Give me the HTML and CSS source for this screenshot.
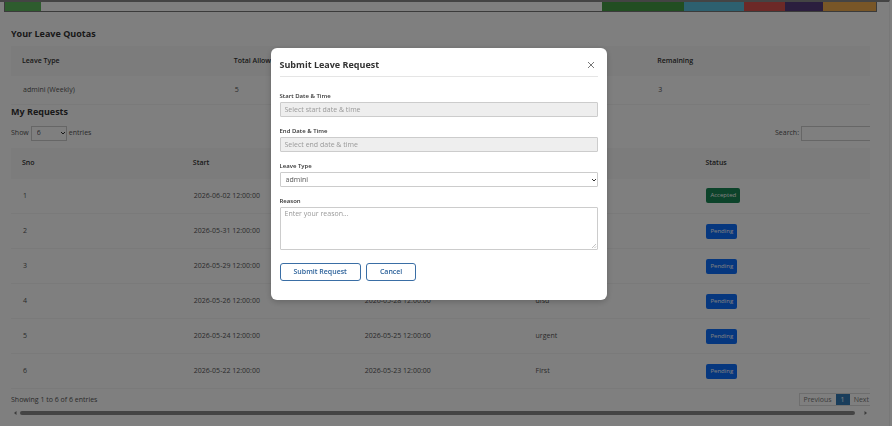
FILE: index.html
```html
<!DOCTYPE html>
<html lang="en">
<head>
<meta charset="utf-8">
<title>Leave Requests</title>
<link rel="stylesheet" href="styles.css">
</head>
<body>
<main class="page">
  <div class="strip">
    <span class="seg seg-start"></span>
    <span class="seg seg-empty"></span>
    <span class="seg seg-green"></span>
    <span class="seg seg-cyan"></span>
    <span class="seg seg-red"></span>
    <span class="seg seg-purple"></span>
    <span class="seg seg-orange"></span>
  </div>
  <div class="content">
    <h2>Your Leave Quotas</h2>
    <table class="quotas">
      <thead><tr><th>Leave Type</th><th>Total Allowed</th><th>Used</th><th>Remaining</th></tr></thead>
      <tbody><tr><td>admini (Weekly)</td><td>5</td><td>2</td><td>3</td></tr></tbody>
    </table>
    <h2>My Requests</h2>
    <div class="wide">
      <div class="tools">
        <label class="length">Show <span class="pick"><select><option>6</option></select><svg viewBox="0 0 6 6"><path d="M1 2l2 2 2-2"/></svg></span> entries</label>
        <label class="search">Search: <input type="search"></label>
      </div>
      <table class="requests">
        <thead><tr><th>Sno</th><th>Start</th><th>End</th><th>Reason</th><th>Status</th></tr></thead>
        <tbody>
          <tr><td>1</td><td>2026-06-02 12:00:00</td><td></td><td></td><td><span class="badge accepted">Accepted</span></td></tr>
          <tr><td>2</td><td>2026-05-31 12:00:00</td><td></td><td></td><td><span class="badge">Pending</span></td></tr>
          <tr><td>3</td><td>2026-05-29 12:00:00</td><td></td><td></td><td><span class="badge">Pending</span></td></tr>
          <tr><td>4</td><td>2026-05-26 12:00:00</td><td>2026-05-28 12:00:00</td><td>disd</td><td><span class="badge">Pending</span></td></tr>
          <tr><td>5</td><td>2026-05-24 12:00:00</td><td>2026-05-25 12:00:00</td><td>urgent</td><td><span class="badge">Pending</span></td></tr>
          <tr><td>6</td><td>2026-05-22 12:00:00</td><td>2026-05-23 12:00:00</td><td>First</td><td><span class="badge">Pending</span></td></tr>
        </tbody>
      </table>
      <div class="foot">
        <span>Showing 1 to 6 of 6 entries</span>
        <nav class="pages"><a href="#">Previous</a><a href="#" class="current">1</a><a href="#">Next</a></nav>
      </div>
    </div>
    <div class="scroll">
      <svg viewBox="0 0 4 6"><path d="M3.5 1v4L1 3z"/></svg>
      <span class="thumb"></span>
      <svg viewBox="0 0 4 6"><path d="M.5 1v4L3 3z"/></svg>
    </div>
  </div>
</main>
<div class="overlay">
  <form class="modal" role="dialog" aria-labelledby="title">
    <header>
      <h3 id="title">Submit Leave Request</h3>
      <button type="button" class="close" aria-label="Close"><svg viewBox="0 0 8 8"><path d="M1 1l6 6M7 1L1 7"/></svg></button>
    </header>
    <div class="field"><label for="start">Start Date &amp; Time</label><input id="start" class="date" placeholder="Select start date &amp; time" readonly></div>
    <div class="field"><label for="end">End Date &amp; Time</label><input id="end" class="date" placeholder="Select end date &amp; time" readonly></div>
    <div class="field"><label for="type">Leave Type</label><span class="pick"><select id="type"><option>admini</option></select><svg viewBox="0 0 6 6"><path d="M1 2l2 2 2-2"/></svg></span></div>
    <div class="field"><label for="reason">Reason</label><span class="pick area"><textarea id="reason" placeholder="Enter your reason..."></textarea><svg viewBox="0 0 6 6"><path d="M1 5l4-4M3.500 5L5 3.500"/></svg></span></div>
    <div class="actions"><button type="button">Submit Request</button><button type="button">Cancel</button></div>
  </form>
</div>
</body>
</html>
```
FILE: styles.css
```css
* { box-sizing: border-box; }
body {
  margin: 0;
  background: #fff;
  color: #555;
  font: 7px/10px "Open Sans", "Noto Sans", sans-serif;
  overflow: hidden;
}
input, select, textarea, button { font: inherit; color: inherit; margin: 0; }
h2, h3 { margin: 0; color: #333; font-size: 9px; line-height: 14px; font-weight: 700; }
.page {
  min-height: 100vh;
  margin-right: 2px;
  border-top: 2px solid #888;
  border-right: 1px solid #f0f0f0;
}
.strip {
  display: flex;
  height: 10px;
  margin: 0 12px 0 4px;
  border: 1px solid #777;
  border-top: 0;
}
.seg-start { flex: 36; background: #5cb85c; }
.seg-empty { flex: 561; }
.seg-green { flex: 82; background: #449d44; }
.seg-cyan { flex: 60; background: #5bc0de; }
.seg-red { flex: 41; background: #d9534f; }
.seg-purple { flex: 38; background: #563d7c; }
.seg-orange { flex: 53; background: #f0ad4e; }
.content { margin: 15px 19px 0 11px; overflow: hidden; }
table { width: 100%; border-collapse: collapse; table-layout: fixed; }
th, td { padding: 0 11px; text-align: left; }
td { padding-left: 12px; border-bottom: 1px solid #f4f4f4; }
th { background: #f8f8f8; color: #333; font-weight: 600; }
.quotas { margin-top: 5px; }
.quotas th { width: 24.65%; height: 30px; }
.quotas td { height: 28px; }
.quotas th:last-child, .requests th:last-child { width: auto; }
.wide { width: calc(100% + 4px); }
.tools { display: flex; justify-content: space-between; align-items: center; height: 29px; }
.tools label { display: flex; align-items: center; gap: 2px; }
.pick { display: grid; align-items: center; }
.pick > * { grid-area: 1 / 1; }
.pick select { appearance: none; }
.pick svg {
  width: 6px;
  height: 6px;
  margin-right: 1px;
  justify-self: end;
  fill: none;
  stroke: #333;
  pointer-events: none;
}
.tools select { width: 36px; height: 15px; padding: 0 5px; border: 1px solid #ccc; border-radius: 0; background: #fff; }
.search input { width: 73px; height: 15px; border: 1px solid #ccc; background: #fff; }
.requests th { width: 19.8%; height: 31px; }
.requests td { height: 35px; }
.badge {
  display: inline-block;
  padding: 2px 4px 3px;
  border-radius: 2px;
  background: #0d6efd;
  color: #fff;
  font-size: 6px;
}
.accepted { background: #198754; }
.foot { display: flex; justify-content: space-between; align-items: center; height: 21px; }
.pages { display: flex; border: 1px solid #ddd; }
.pages a { padding: 0 4px; line-height: 11px; color: #777; text-decoration: none; }
.pages .current { padding: 0 5px; background: #337ab7; color: #fff; }
.scroll { display: flex; align-items: center; gap: 3px; height: 5px; padding: 0 2px; }
.scroll svg { width: 4px; height: 6px; fill: #777; }
.scroll svg:last-child { margin-left: 6px; }
.thumb { flex: 1; height: 4px; border-radius: 2px; background: #888; }
.overlay {
  position: fixed;
  inset: 0;
  display: flex;
  justify-content: center;
  align-items: flex-start;
  padding: 48px 15px 0 0;
  background: rgba(0, 0, 0, .5);
}
.modal {
  width: 38%;
  min-width: 336px;
  padding: 9px 9px 19px;
  border-radius: 6px;
  background: #fff;
  box-shadow: 0 2px 6px rgba(0, 0, 0, .2);
}
.modal header {
  display: flex;
  justify-content: space-between;
  align-items: center;
  height: 20px;
  padding-bottom: 3px;
  margin-bottom: 14px;
  border-bottom: 1px solid #e5e5e5;
}
.close { display: flex; padding: 3px; border: 0; background: none; }
.close svg { width: 8px; height: 8px; fill: none; stroke: #777; }
.field { margin-bottom: 9px; }
.field label { display: block; height: 11px; font-size: 6px; font-weight: 600; color: #333; }
.field input, .field select, .field textarea {
  display: block;
  width: 100%;
  height: 15px;
  padding: 0 4px;
  border: 1px solid #ccc;
  border-radius: 1px;
  background: #fff;
}
.field .date { background: #eee; }
.field select { padding: 0 5px; }
.field textarea { height: 43px; padding: 1px 4px; resize: none; }
.area svg { align-self: end; margin-bottom: 1px; stroke: #888; stroke-width: 0.5px; }
::placeholder { color: #999; opacity: 1; }
.actions { display: flex; gap: 5px; margin-top: 13px; }
.actions button {
  height: 18px;
  padding: 0 13px;
  border: 1px solid #3a6ea5;
  border-radius: 3px;
  background: #fff;
  color: #2a6099;
  font-weight: 600;
}
```
